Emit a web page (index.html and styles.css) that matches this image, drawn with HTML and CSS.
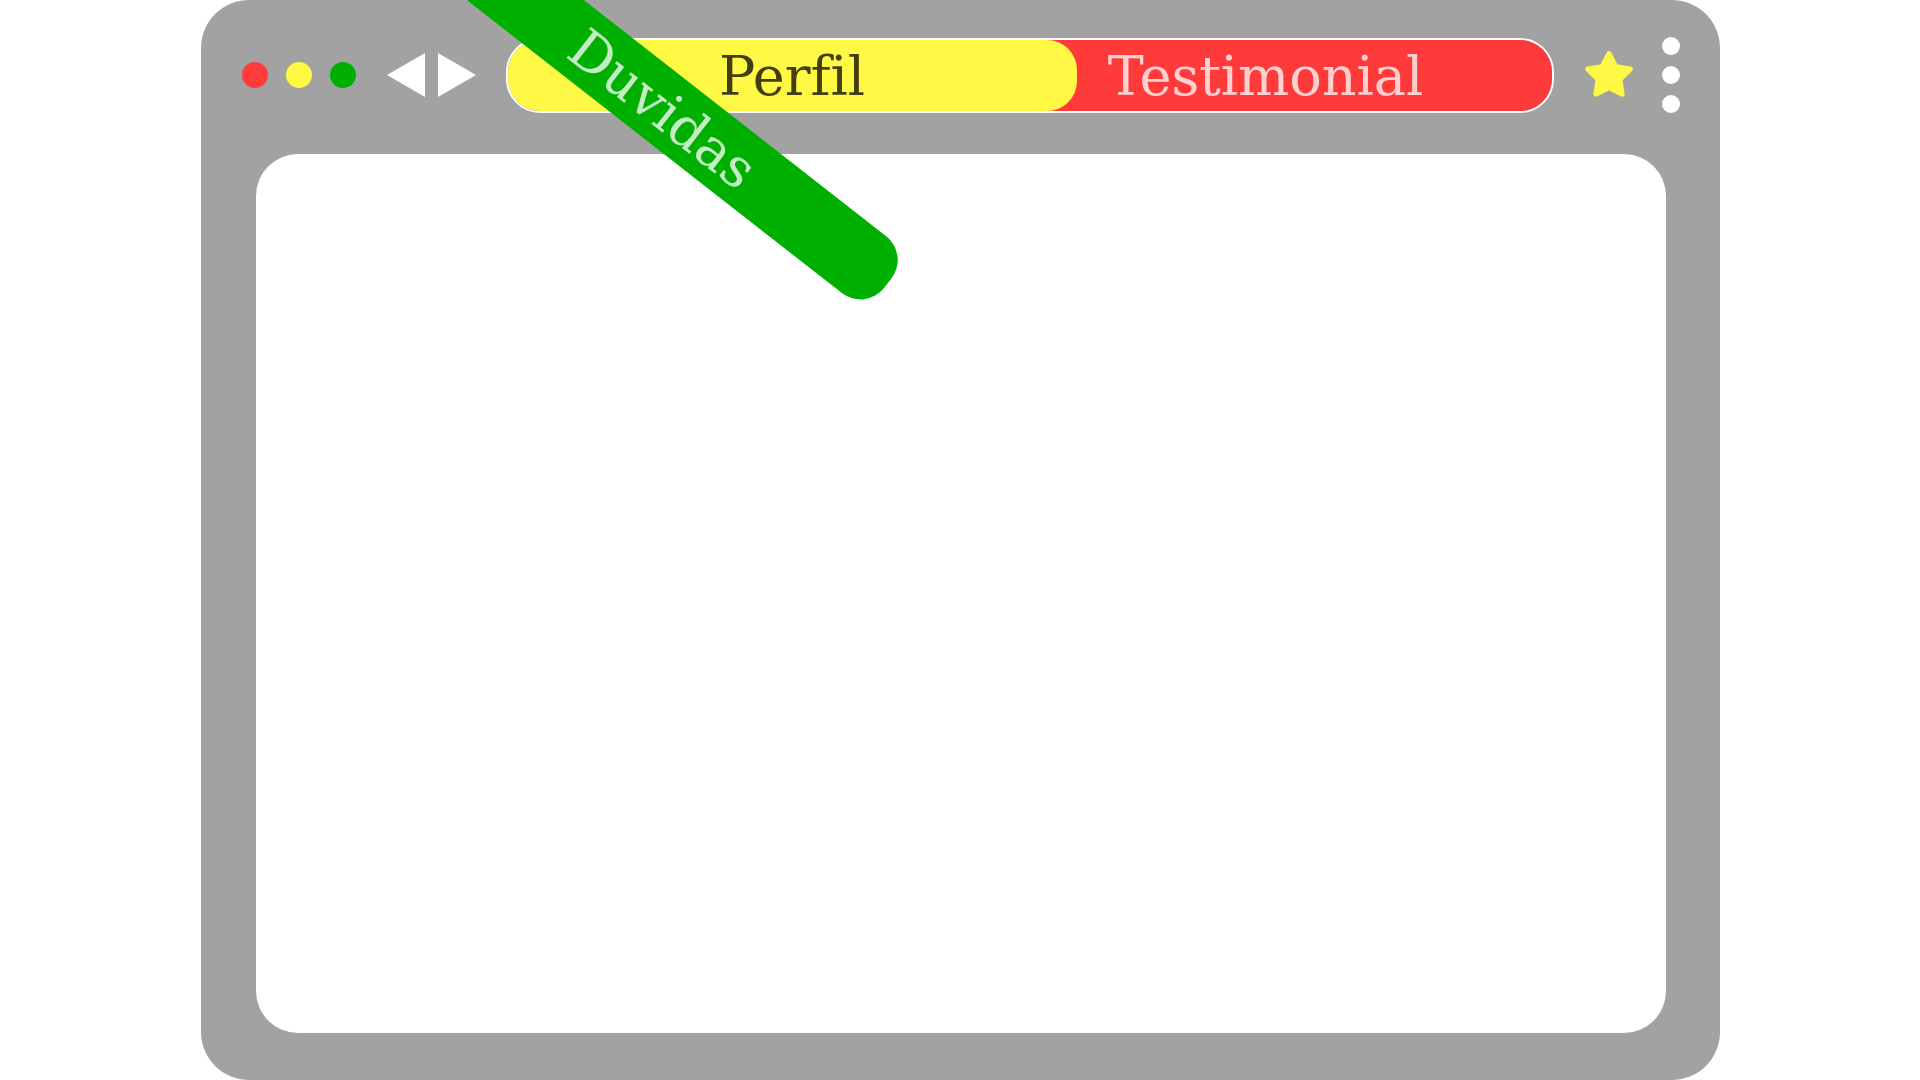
FILE: index.html
```html
<!DOCTYPE html>
<html lang="pt">
<head>
<meta charset="utf-8">
<title>Browser</title>
<link rel="stylesheet" href="styles.css">
</head>
<body>
<div class="page">
  <div class="browser">
    <div class="toolbar">
      <div class="lights">
        <span class="light light-red"></span>
        <span class="light light-yellow"></span>
        <span class="light light-green"></span>
      </div>
      <div class="arrows">
        <svg class="arrow" width="38" height="44" viewBox="0 0 38 44"><polygon points="38,0 38,44 0,22" fill="#ffffff"/></svg>
        <svg class="arrow" width="38" height="44" viewBox="0 0 38 44"><polygon points="0,0 0,44 38,22" fill="#ffffff"/></svg>
      </div>
      <div class="tabs">
        <div class="tab tab-perfil">Perfil</div>
        <div class="tab tab-testimonial">Testimonial</div>
      </div>
      <svg class="star" width="50" height="50" viewBox="0 0 50 50">
        <polygon points="25,3.5 31.76,16.7 46.4,19.05 35.94,29.55 38.22,44.2 25,37.5 11.78,44.2 14.06,29.55 3.6,19.05 18.24,16.7" fill="#fff845" stroke="#fff845" stroke-width="5" stroke-linejoin="round"/>
      </svg>
      <div class="menu">
        <span class="menu-dot"></span>
        <span class="menu-dot"></span>
        <span class="menu-dot"></span>
      </div>
    </div>
    <div class="screen"></div>
    <div class="tab tab-duvidas">Duvidas</div>
  </div>
</div>
</body>
</html>
```
FILE: styles.css
```css
html, body {
  margin: 0;
  padding: 0;
  background: #ffffff;
  overflow: hidden;
}

.page {
  width: 1920px;
  height: 1080px;
  display: flex;
  justify-content: center;
}

.browser {
  position: relative;
  width: 1519px;
  height: 1080px;
  background: #a2a2a2;
  border-radius: 48px;
  display: flex;
  flex-direction: column;
}

.toolbar {
  height: 150px;
  display: flex;
  align-items: center;
  padding: 0 40px 0 41px;
  flex-shrink: 0;
}

.lights {
  display: flex;
  gap: 18px;
}

.light {
  display: block;
  width: 26px;
  height: 26px;
  border-radius: 50%;
}

.light-red { background: #ff3b3b; }
.light-yellow { background: #fff845; }
.light-green { background: #00b000; }

.arrows {
  display: flex;
  gap: 13px;
  margin-left: 31px;
}

.arrow {
  display: block;
}

.tabs {
  margin-left: 30px;
  width: 1048px;
  height: 75px;
  box-sizing: border-box;
  border: 2px solid #ffffff;
  border-radius: 34px;
  overflow: hidden;
  display: flex;
  position: relative;
}

.tab {
  font-family: "DejaVu Serif", serif;
  font-size: 54px;
  font-variant-ligatures: none;
  display: flex;
  align-items: center;
  justify-content: center;
  box-sizing: border-box;
  padding-top: 3px;
  white-space: nowrap;
}

.tab-perfil {
  width: 569px;
  flex-shrink: 0;
  background: #fff845;
  color: #423e12;
  border-radius: 30px;
  position: relative;
  z-index: 2;
}

.tab-testimonial {
  flex: 1;
  margin-left: -97px;
  background: #ff3a3a;
  color: #ffd0d0;
  z-index: 1;
}

.star {
  display: block;
  margin-left: 30px;
}

.menu {
  margin-left: 28px;
  display: flex;
  flex-direction: column;
  gap: 11px;
}

.menu-dot {
  display: block;
  width: 18px;
  height: 18px;
  border-radius: 50%;
  background: #ffffff;
}

.screen {
  margin: 4px 54px 47px 55px;
  flex: 1;
  background: #ffffff;
  border-radius: 42px;
}

.tab-duvidas {
  position: absolute;
  left: 178px;
  top: 72px;
  width: 569px;
  height: 72px;
  background: #00b000;
  color: #c4ecc4;
  border-radius: 30px;
  transform: rotate(38deg);
  z-index: 5;
}
```
